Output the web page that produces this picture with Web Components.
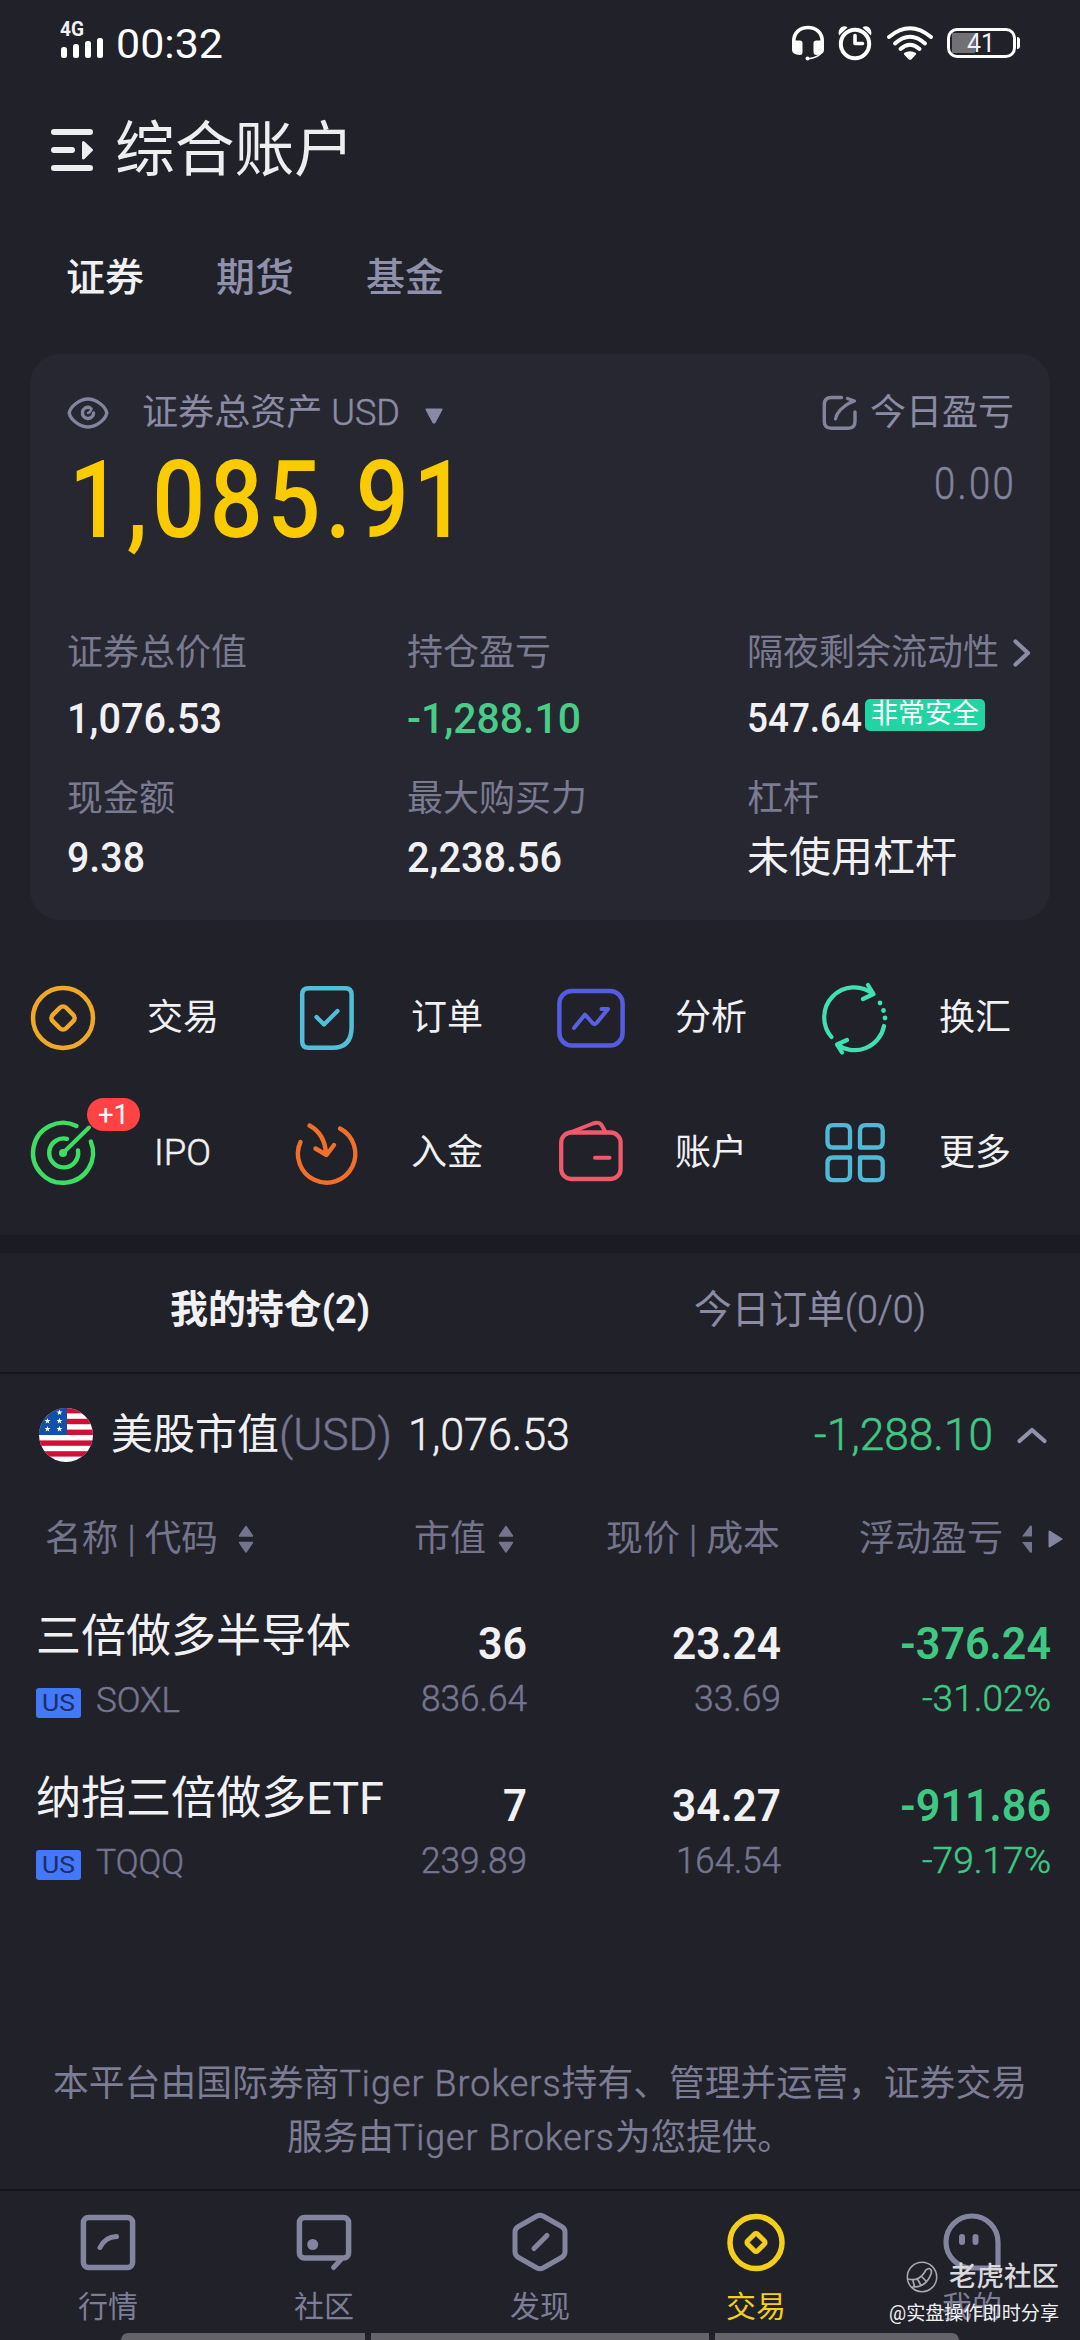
<!DOCTYPE html>
<html lang="zh-CN">
<head>
<meta charset="utf-8">
<title>综合账户</title>
<style>
html,body{margin:0;padding:0;background:#21212a}
body{width:1080px;height:2340px;overflow:hidden;font-family:Roboto,"Noto Sans CJK SC",sans-serif;color:#f1f1f4;
--muted:#7a7a90;--soft:#8b8ba4;--up:#3fc883;--line:#15151c}
</style>
</head>
<body>
<account-app></account-app>
<script>
const define=(name,html,init)=>customElements.define(name,class extends HTMLElement{
  constructor(){super();this.attachShadow({mode:'open'});}
  connectedCallback(){
    if(this.ready)return;this.ready=true;
    this.shadowRoot.innerHTML=typeof html==='function'?html(this):html;
    if(init)init(this);
  }
});

/* One line of text set to a given advance width. Attributes: s (size), w (width), b (weight), c (colour), t (tracking) */
define('fit-text',el=>`<style>
:host{display:inline-block;flex:none;white-space:nowrap;line-height:1;font-size:${el.getAttribute('s')}px;
font-weight:${el.getAttribute('b')||400};letter-spacing:${el.getAttribute('t')||0}em;${el.hasAttribute('c')?`color:${el.getAttribute('c')};`:''}}
:host([b="300"]),:host([b="350"]){-webkit-text-stroke:.5px currentColor}
span{display:inline-block;transform-origin:0 50%;white-space:pre}
::slotted(i){font-style:normal;font-weight:300;-webkit-text-stroke:.5px currentColor}</style><span><slot></slot></span>`,el=>{
  const w=+el.getAttribute('w');if(!w)return;
  const span=el.shadowRoot.querySelector('span');
  const n=span.getBoundingClientRect().width;
  el.style.width=w+'px';
  if(n)span.style.transform=`scaleX(${w/n})`;
});

const P=(d,w,c,x='')=>`<path d="${d}" fill="none" stroke="${c}" stroke-width="${w}" stroke-linecap="round" stroke-linejoin="round" ${x}/>`;
const star=(x,y)=>`<path transform="translate(${x} ${y})" fill="#fff" d="M0-3 .8-.9 3-.9 1.2.4 1.8 2.5 0 1.2-1.8 2.5-1.2.4-3-.9-.8-.9Z"/>`;
const N='#83849e';
const ICONS={
signal:[44,36,`<rect x="1" y="25" width="6" height="11" rx="2.5" fill="#fff"/><rect x="13" y="22" width="6" height="14" rx="2.5" fill="#fff"/><rect x="25" y="19" width="6" height="17" rx="2.5" fill="#fff"/><rect x="37" y="16" width="6" height="20" rx="2.5" fill="#fff"/>`],
headset:[34,36,P('M2.8 20V16C2.8 7.5 9 2.5 17 2.5S31.200 7.500 31.200 16V20',3.6,'#fff')+`<path fill="#fff" d="M1 15.500H9Q11.500 15.500 11.500 18V27Q11.500 30 9 30Q1 29.500 1 25ZM33 15.500H25.500Q22.500 15.500 22.500 18V27Q22.500 30 25.500 30Q33 29.500 33 25Z"/>`+P('M31 26Q28 33 16.500 33.800',1.800,'#fff')+`<circle cx="16.500" cy="33.500" r="2" fill="#fff"/>`],
alarm:[34,36,`<circle cx="17" cy="19" r="14.200" fill="none" stroke="#fff" stroke-width="4"/>`+P('M17 10.500V18.500H24.500',3.600,'#fff')+`<path fill="#fff" d="M1 10.500Q-.5 5 3.500 2Q7 .2 9.500 2.500ZM33 10.500Q34.500 5 30.500 2Q27 .2 24.500 2.500Z"/>`],
wifi:[46,35,P('M2 11Q23-6.500 44 11',4,'#fff')+P('M8 17.500Q23 4 38 17.500',4,'#fff')+P('M13.500 23Q23 14.500 32.500 23',4,'#fff')+`<path fill="#fff" d="M17 27Q23 23.500 29 27Q29.500 28 28.500 29L24.500 33.200Q23 34.500 21.500 33.200L17.500 29Q16.500 28 17 27Z"/>`],
menu:[44,44,P('M4 4H40M4 22H22M4 40H40',6,'#eeeef1')+`<path fill="#eeeef1" stroke="#eeeef1" stroke-width="2" stroke-linejoin="round" d="M33 14.500Q33 13.500 34 14.500L41.500 21.500 42 22 34 30Q33 31 33 30Z"/>`],
eye:[42,32,P('M2.200 16Q3 11 9 6.500Q21-2.500 33 6.500Q39 11 39.800 16Q39 21 33 25.500Q21 34.500 9 25.500Q3 21 2.200 16Z',3.400,N)+P('M22.500 10.500A5.600 5.600 0 1 0 26.600 16',3.400,N)+P('M21 16Q23.500 15.500 24.500 11.500',2.600,N)],
down:[18,16,`<path fill="#8a8aa6" stroke="#8a8aa6" stroke-width="2" stroke-linejoin="round" d="M1.500 1.500H16.500L9.500 14.500H8.500Z"/>`],
share:[36,36,P('M19.500 2.500H9.500Q2.300 2.500 2.300 9.500V26.500Q2.300 33.200 9.500 33.200H26Q33 33.200 33 26.500V17',3.400,'#83849c')+P('M13.500 24Q15 14.500 30 6.500M25.500 3.500L32.500 6L26.500 8.500',3.200,'#83849c')],
next:[18,28,P('M2.500 2.500L15 14L2.500 25.500',4.200,'#8c8ca6')],
up:[30,18,P('M2.500 15L15 4L27.500 15',4.200,'#9293ab')],
sort:[16,28,`<path fill="#74748f" stroke="#74748f" stroke-width="1.500" stroke-linejoin="round" d="M1.500 11 8 1.500 14.500 11ZM1.500 17.500 8 27 14.500 17.500Z"/>`],
half:[10,28,`<path fill="#74748f" d="M0 11.500 8 .8Q10 0 10 2V11.500ZM0 17H10V26.500Q10 28.500 8 27.500Z"/>`],
right:[15,18,`<path fill="#8485a0" stroke="#8485a0" stroke-width="2" stroke-linejoin="round" d="M1.500 1.500 13.500 9 1.500 16.500Z"/>`],
flag:[54,54,`<defs><clipPath id="r"><circle cx="27" cy="27" r="27"/></clipPath></defs><g clip-path="url(#r)"><rect width="54" height="54" fill="#fff"/>${[0,1,2,3,4].map(i=>`<rect y="${i*10.8}" width="54" height="5.400" fill="#d10f35"/>`).join('')}<rect width="28" height="27" fill="#1150a8"/>${star(8.500,13)+star(8.500,21)+star(20.500,4.500)+star(20.500,13)+star(20.500,21)}</g>`],
trade:[66,66,`<circle cx="33" cy="33" r="30" fill="none" stroke="#f0a828" stroke-width="4.500"/><rect x="23.500" y="23.500" width="19" height="19" rx="4.500" transform="rotate(45 33 33)" fill="none" stroke="#f0a828" stroke-width="4.500"/>`],
order:[66,66,P('M14.500 3.200H51.500Q57.600 3.200 57.600 9.500V42Q57.600 62.800 38.500 62.800H14.500Q8.200 62.800 8.200 56.500V9.500Q8.200 3.200 14.500 3.200Z',4.500,'#52bfd9')+P('M22.500 32L30 39.500L43.500 26',4.200,'#52bfd9')],
chart:[66,66,`<rect x="1.400" y="6" width="63.200" height="54.500" rx="12.500" fill="none" stroke="#575be0" stroke-width="4.500"/>`+P('M16 43L27 29.500L35 38.500Q37 40 39 37.500L50 24H43.500',4,'#5b5fe2')],
swap:[66,66,P('M9.500 52A30 30 0 0 1 51 9M46 0L51.500 9L41 14',4.200,'#3ee0b4')+P('M62 41A30 30 0 0 1 15 59.500M25 55L15 59.500L20 67.500',4.200,'#3ee0b4')+`<g fill="#3ee0b4"><circle cx="58" cy="18" r="2.400"/><circle cx="61.500" cy="25.500" r="2.400"/><circle cx="63" cy="33" r="2.400"/></g>`],
target:[66,66,P('M46.500 6A30 30 0 1 0 60.800 21.500',4.400,'#3ddf62')+P('M37 18.800A14.500 14.500 0 1 0 48 30.500',4.400,'#3ddf62')+P('M33 33L59 7.500',4,'#3ddf62')+`<circle cx="33" cy="33" r="4" fill="#3ddf62"/>`],
deposit:[66,66,P('M6.500 22A28.700 28.700 0 1 0 46 8.500',4.400,'#f0702a')+P('M15.500 5.500Q31 14 32 34M21.500 28.500L32.500 35L40 25',4.400,'#f0702a')],
wallet:[66,66,`<rect x="3.200" y="12.500" width="59.400" height="46.500" rx="10" fill="none" stroke="#f0596b" stroke-width="4.300"/>`+P('M7 14.500L35 3.500Q41 1.500 43.500 5L47.500 12M37 37.700H51.500',4,'#f0596b')],
more:[66,66,['M5.500 11Q5.500 5.200 11 5.200H22.500Q28 5.200 28 11V27.500H11Q5.500 27.500 5.500 22Z','M38 27.500V11Q38 5.200 43.500 5.200H55Q60.700 5.200 60.700 11V22Q60.700 27.500 55 27.500Z','M28 37.500V54.500Q28 60.200 22.500 60.200H11Q5.500 60.200 5.500 54.500V43Q5.500 37.500 11 37.500Z','M38 37.500H55Q60.700 37.500 60.700 43V54.500Q60.700 60.200 55 60.200H43.500Q38 60.200 38 54.500Z'].map(d=>P(d,4.300,'#4fbad8')).join('')],
quotes:[60,60,`<rect x="5.400" y="5.400" width="49.200" height="50" rx="5" fill="none" stroke="${N}" stroke-width="5.500"/>`+P('M22 35.500Q27 25 38.500 24.500',5,N)],
social:[60,60,`<rect x="5.400" y="5.400" width="49.200" height="40.600" rx="5" fill="none" stroke="${N}" stroke-width="5.500"/><circle cx="18.700" cy="32.500" r="5.500" fill="${N}"/>`+P('M47 47.500L39.500 55.500',5,N)],
explore:[60,60,P('M33 4L51.500 14.500Q55 16.500 55 20V40Q55 43.500 51.500 45.500L33 56Q30 57.500 27 56L8.500 45.500Q5 43.500 5 40V20Q5 16.500 8.500 14.500L27 4Q30 2.500 33 4Z',5,N)+P('M24 36.500L37 23.500',5,N)],
coin:[60,60,`<circle cx="30" cy="30.500" r="26" fill="none" stroke="#f3cf1b" stroke-width="5.500"/><rect x="23" y="23.500" width="14" height="14" rx="2" transform="rotate(45 30 30.500)" fill="none" stroke="#f3cf1b" stroke-width="5"/>`],
me:[60,60,P('M56 56H30A26 26 0 1 1 56 30Z',5.200,N)+P('M20 25V30M33.500 25V30',6,N)],
tiger:[32,32,`<circle cx="16" cy="16" r="14.700" fill="none" stroke="#a9a9b0" stroke-width="1.500"/>`+P('M2 18Q12 21 18.500 11.500Q19.500 8 23 7.500Q26.500 8.500 25 13Q20 26.500 6.500 26M7 19.500L8.500 26M12 19L15 24.500M16 16L20.500 20.500',1.700,'#a9a9b0')]
};
define('ui-icon',el=>{const [w,h,s]=ICONS[el.getAttribute('name')];
return `<style>:host{display:block;flex:none;width:${w}px;height:${h}px}svg{display:block;overflow:visible}</style><svg width="${w}" height="${h}" viewBox="0 0 ${w} ${h}">${s}</svg>`;});

define('status-bar',`<style>
:host{display:flex;height:88px;box-sizing:border-box;padding:0 60px;align-items:center}
.sig{display:flex;flex-direction:column;width:44px;height:36px;position:relative;margin-top:-9px}
.sig fit-text{position:absolute;left:0;top:-3px}
.time{margin-left:12px;margin-top:1px}.r{margin-left:auto;display:flex;align-items:center;margin-top:-2px}
.bat{box-sizing:border-box;width:69px;height:30px;border:3px solid #fff;border-radius:10px;display:flex;align-items:center;padding:0 2px;margin-left:14px;
background:linear-gradient(#707075,#707075) 2px 50%/23px 20px no-repeat}
.bat fit-text{margin-left:15px}.nub{width:3px;height:12px;background:#fff;border-radius:0 3px 3px 0;margin-left:1px}
</style><div class="sig"><fit-text s="21" w="24" b="700">4G</fit-text><ui-icon name="signal"></ui-icon></div>
<fit-text class="time" s="41" w="107" c="#fff">00:32</fit-text>
<div class="r"><ui-icon name="headset" style="margin-right:13px"></ui-icon><ui-icon name="alarm" style="margin-right:15px"></ui-icon><ui-icon name="wifi"></ui-icon>
<div class="bat"><fit-text s="25" w="28" b="400">41</fit-text></div><div class="nub"></div></div>`);

define('page-title',`<style>:host{display:flex;align-items:center;height:120px;padding-left:50px}
fit-text{margin:5px 0 0 21px}ui-icon{margin-top:4px}</style><ui-icon name="menu"></ui-icon><fit-text s="60" w="239" c="#eeeef1"><slot></slot></fit-text>`);

define('segment-tabs',`<style>:host{display:flex;align-items:center;height:141px;gap:72px;padding-left:66px}</style>
<fit-text s="39" w="78" b="500">证券</fit-text><fit-text s="39" w="78" b="500" c="#8f90ab">期货</fit-text><fit-text s="39" w="78" b="500" c="#8f90ab">基金</fit-text>`);

define('stat-cell',`<style>:host{display:flex;flex-direction:column}
.l,.v{display:flex;align-items:center;white-space:nowrap}.l{height:var(--lh);color:var(--muted)}.v{height:var(--vh)}</style>
<div class="l"><slot name="label"></slot></div><div class="v"><slot></slot></div>`);

define('asset-card',`<style>
:host{display:block;box-sizing:border-box;margin:5px 30px 0;height:566px;padding:20px 37px 0;border-radius:30px;background:#272732}
.a,.b{display:flex;align-items:center}.a{height:78px;color:var(--soft)}.b{height:96px;justify-content:space-between}
.sum{height:63px;display:flex;align-items:center;align-self:flex-start}
.g{display:grid;grid-template-columns:repeat(3,340px);margin-top:82px}
.r1{--lh:46px;--vh:86px}.r2{--lh:73px;--vh:46px}
</style>
<div class="a"><ui-icon name="eye"></ui-icon><fit-text style="margin-left:33px" s="36" w="258">证券总资产 <i>USD</i></fit-text><ui-icon name="down" style="margin:5px 0 0 25px"></ui-icon>
<ui-icon name="share" style="margin-left:auto"></ui-icon><fit-text s="36" w="144" style="margin:0 -1px 0 12px">今日盈亏</fit-text></div>
<div class="b"><fit-text s="108" w="402" b="500" c="#facb00" t="0.05" style="margin-left:2px">1,085.91</fit-text><div class="sum"><fit-text s="44" w="82" b="300" c="#83839c" t="0.06" style="margin-right:-3px">0.00</fit-text></div></div>
<div class="g">
<stat-cell class="r1"><fit-text slot="label" s="36" w="180">证券总价值</fit-text><fit-text s="42" w="155" b="500">1,076.53</fit-text></stat-cell>
<stat-cell class="r1"><fit-text slot="label" s="36" w="144">持仓盈亏</fit-text><fit-text s="42" w="174" b="500" c="#48cc88">-1,288.10</fit-text></stat-cell>
<stat-cell class="r1"><fit-text slot="label" s="36" w="252">隔夜剩余流动性</fit-text><ui-icon slot="label" name="next" style="margin-left:14px"></ui-icon><fit-text s="40" w="115" b="500">547.64</fit-text><asset-tag></asset-tag></stat-cell>
<stat-cell class="r2"><fit-text slot="label" s="36" w="108">现金额</fit-text><fit-text s="42" w="78" b="500">9.38</fit-text></stat-cell>
<stat-cell class="r2"><fit-text slot="label" s="36" w="180">最大购买力</fit-text><fit-text s="42" w="155" b="500">2,238.56</fit-text></stat-cell>
<stat-cell class="r2"><fit-text slot="label" s="36" w="72">杠杆</fit-text><fit-text s="42" w="210">未使用杠杆</fit-text></stat-cell>
</div>`);
define('asset-tag',`<style>:host{display:flex;align-items:center;justify-content:center;width:120px;height:32px;border-radius:5px;background:#22d3a3;margin:-9px 0 0 3px;color:#fff}</style><fit-text s="27" w="108">非常安全</fit-text>`);

define('action-item',el=>`<style>:host{display:flex;align-items:center;height:135px;position:relative}
.t{width:173px;display:flex;justify-content:center}
.badge{position:absolute;left:57px;top:13px;width:53px;height:33px;border-radius:17px;background:#ff4345;display:flex;align-items:center;justify-content:center;color:#fff}</style>
<ui-icon name="${el.getAttribute('icon')}"></ui-icon><div class="t"><fit-text s="36" b="${el.getAttribute('b')||400}" w="${el.getAttribute('tw')||72}"><slot></slot></fit-text></div>
${el.hasAttribute('badge')?`<div class="badge"><fit-text s="28" w="31">${el.getAttribute('badge')}</fit-text></div>`:''}`);
define('action-grid',`<style>:host{display:grid;grid-template-columns:repeat(4,264px);padding:30px 0 15px 30px;border-bottom:18px solid #1b1b24;height:270px}</style>
<action-item icon="trade">交易</action-item><action-item icon="order">订单</action-item><action-item icon="chart">分析</action-item><action-item icon="swap">换汇</action-item>
<action-item icon="target" badge="+1" tw="57" b="350">IPO</action-item><action-item icon="deposit">入金</action-item><action-item icon="wallet">账户</action-item><action-item icon="more">更多</action-item>`);

define('position-tabs',`<style>:host{display:flex;height:119px;box-sizing:content-box;border-bottom:2px solid var(--line)}
div{flex:1;display:flex;align-items:center;justify-content:center;padding-bottom:4px}</style>
<div><fit-text s="39" w="200" b="700">我的持仓(2)</fit-text></div><div><fit-text s="39" w="232" c="#8b8ba4">今日订单<i>(0/0)</i></fit-text></div>`);

define('market-summary',`<style>:host{display:flex;height:122px;align-items:center;padding:0 33px 0 39px}</style>
<ui-icon name="flag"></ui-icon><fit-text s="42" w="168" style="margin-left:18px">美股市值</fit-text><fit-text s="44" w="113" b="300" c="#757590">(USD)</fit-text>
<fit-text s="44" w="162" b="350" style="margin-left:16px">1,076.53</fit-text><fit-text s="44" w="179" b="350" c="#3fc883" style="margin-left:auto">-1,288.10</fit-text><ui-icon name="up" style="margin-left:24px"></ui-icon>`);

define('table-head',`<style>:host{display:flex;height:85px;padding-bottom:2px;align-items:center;color:#74748c;padding-left:45px}</style>
<fit-text s="36" w="173">名称 <i>|</i> 代码</fit-text><ui-icon name="sort" style="margin-left:20px"></ui-icon>
<fit-text s="36" w="72" style="margin-left:160px">市值</fit-text><ui-icon name="sort" style="margin-left:12px"></ui-icon>
<fit-text s="36" w="174" style="margin-left:92px">现价 <i>|</i> 成本</fit-text>
<fit-text s="36" w="144" style="margin-left:79px">浮动盈亏</fit-text><ui-icon name="half" style="margin-left:19px"></ui-icon><ui-icon name="right" style="margin-left:16px"></ui-icon>`);

define('position-row',el=>{const [nw,name,sw,sym,...n]=el.getAttribute('data').split('~');
const col=(x,w1,t1,w2,t2,g)=>`<div class="n" style="width:${x}px;${g?'color:var(--up)':''}"><div class="p"><fit-text s="44" w="${w1}" b="600">${t1}</fit-text></div><div class="q" ${g?'style="color:inherit"':''}><fit-text s="36" w="${w2}" b="${g?350:300}">${t2}</fit-text></div></div>`;
return `<style>:host{display:flex;height:162px;box-sizing:border-box;padding:35px 0 0 36px}
.name{width:350px}.a{height:37px;display:flex;align-items:center}.s{display:flex;align-items:center;height:95px}
.us{width:45px;height:30px;border-radius:3px;background:#4478fa;color:#1b2e66;display:flex;align-items:center;justify-content:center;margin-right:15px}
.n{display:flex;flex-direction:column;align-items:flex-end}.p{height:52px;display:flex;align-items:center}.q{height:57px;display:flex;align-items:center;color:#757590}</style>
<div class="name"><div class="a"><fit-text s="45" w="${nw}">${name}</fit-text></div>
<div class="s"><div class="us"><fit-text s="24" w="33">US</fit-text></div><fit-text s="35" w="${sw}" b="300" c="#757590" style="margin-bottom:4px">${sym}</fit-text></div></div>
${col(141,n[0],n[1],n[2],n[3])}${col(254,n[4],n[5],n[6],n[7])}${col(270,n[8],n[9],n[10],n[11],1)}`;});

define('legal-note',`<style>:host{display:flex;flex-direction:column;align-items:center;margin-top:150px;height:132px;color:#7c7c94}
div{height:54px;display:flex;align-items:center}</style>
<div><fit-text s="36" w="974">本平台由国际券商<i style="letter-spacing:.03em">Tiger Brokers</i>持有、管理并运营，证券交易</fit-text></div><div><fit-text s="36" w="506">服务由<i style="letter-spacing:.03em">Tiger Brokers</i>为您提供。</fit-text></div>`);

define('nav-item',el=>`<style>:host{display:flex;flex-direction:column;align-items:center;flex:1;padding-top:21px;color:#7c7d96}
:host([active]){color:#f3cf1b}div{height:53px;padding-top:8px;display:flex;align-items:center}</style>
<ui-icon name="${el.getAttribute('icon')}"></ui-icon><div><fit-text s="30" w="60"><slot></slot></fit-text></div>`);
define('bottom-nav',`<style>:host{display:flex;height:142px;border-top:2px solid var(--line)}</style>
<nav-item icon="quotes">行情</nav-item><nav-item icon="social">社区</nav-item><nav-item icon="explore">发现</nav-item><nav-item icon="coin" active>交易</nav-item><nav-item icon="me">我的</nav-item>`);
define('gesture-bar',`<style>:host{display:flex;height:7px;gap:6px;justify-content:center}b{background:#636369;height:7px;width:244px}
.m{width:338px}.l{border-radius:7px 0 0 0}.r{border-radius:0 7px 0 0}</style><b class="l"></b><b class="m"></b><b class="r"></b>`);
define('community-mark',`<style>:host{position:absolute;right:21px;top:2258px;display:flex;flex-direction:column;align-items:flex-end}
.a{display:flex;align-items:center;height:38px}.b{display:flex;align-items:center;height:36px}</style>
<div class="a"><ui-icon name="tiger" style="margin-right:11px"></ui-icon><fit-text s="27.5" w="110" b="500" c="#d9d9dd">老虎社区</fit-text></div>
<div class="b"><fit-text s="19.5" w="170" c="#f0f0f2">@实盘操作即时分享</fit-text></div>`);

define('account-app',`<style>:host{display:block;position:relative;width:1080px;height:2340px;overflow:hidden;background:#21212a}</style>
<status-bar></status-bar><page-title>综合账户</page-title><segment-tabs></segment-tabs><asset-card></asset-card><action-grid></action-grid>
<position-tabs></position-tabs><market-summary></market-summary><table-head></table-head>
<position-row data="315~三倍做多半导体~84~SOXL~49~36~106~836.64~109~23.24~87~33.69~151~-376.24~129~-31.02%"></position-row>
<position-row data="348~纳指三倍做多ETF~88~TQQQ~24~7~106~239.89~109~34.27~105~164.54~151~-911.86~129~-79.17%"></position-row>
<legal-note></legal-note><bottom-nav></bottom-nav><gesture-bar></gesture-bar><community-mark></community-mark>`);
</script>
</body>
</html>
